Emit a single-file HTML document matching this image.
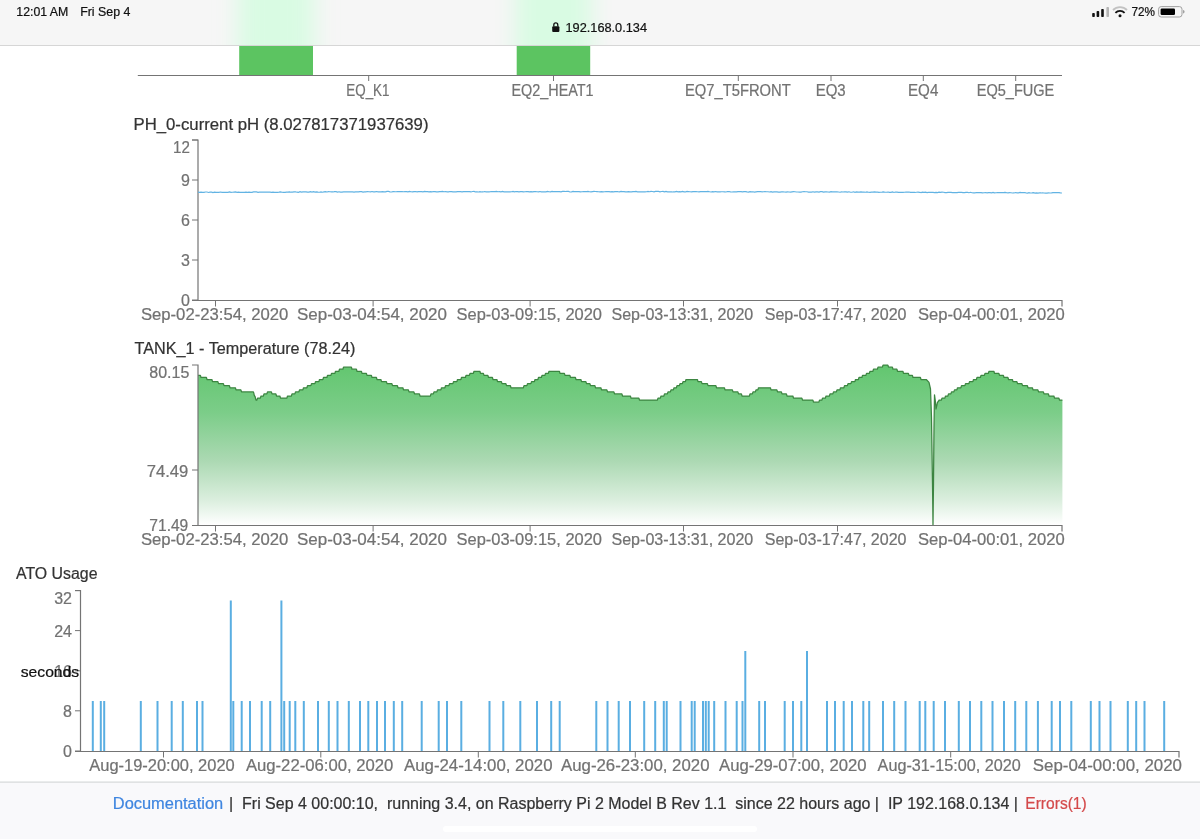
<!DOCTYPE html><html><head><meta charset="utf-8"><style>
html,body{margin:0;padding:0;background:#fff;width:1200px;height:839px;overflow:hidden}
svg{display:block;font-family:"Liberation Sans", sans-serif;will-change:transform}
text{white-space:pre}
</style></head><body>
<svg width="1200" height="839" viewBox="0 0 1200 839">
<defs>
<linearGradient id="tg" x1="0" y1="365" x2="0" y2="525" gradientUnits="userSpaceOnUse">
<stop offset="0" stop-color="#62c66f"/><stop offset="0.3" stop-color="#7ccd89"/><stop offset="0.6" stop-color="#acd9b3"/><stop offset="0.85" stop-color="#dcefdf"/><stop offset="1" stop-color="#ffffff"/>
</linearGradient>
<filter id="blur" x="-50%" y="-50%" width="200%" height="200%"><feGaussianBlur stdDeviation="11 0"/></filter>
<clipPath id="sb"><rect x="0" y="0" width="1200" height="45"/></clipPath>
</defs>
<rect x="0" y="0" width="1200" height="839" fill="#ffffff"/>

<rect x="239.2" y="40" width="73.8" height="35.2" fill="#5cc461"/>
<rect x="516.7" y="40" width="73.5" height="35.2" fill="#5cc461"/>
<path d="M137.8,75.5 H1062" stroke="#747474" stroke-width="1.2" fill="none"/>
<path d="M368.7,75.5 V81" stroke="#747474" stroke-width="1" fill="none"/>
<path d="M553.5,75.5 V81" stroke="#747474" stroke-width="1" fill="none"/>
<path d="M738.3,75.5 V81" stroke="#747474" stroke-width="1" fill="none"/>
<path d="M831,75.5 V81" stroke="#747474" stroke-width="1" fill="none"/>
<path d="M923.3,75.5 V81" stroke="#747474" stroke-width="1" fill="none"/>
<path d="M1015.7,75.5 V81" stroke="#747474" stroke-width="1" fill="none"/>
<text x="346.3" y="95.6" font-size="16" fill="#727272" stroke="#727272" stroke-width="0.22" text-anchor="start" font-weight="normal" textLength="43.2" lengthAdjust="spacingAndGlyphs" >EQ_K1</text>
<text x="511.5" y="95.6" font-size="16" fill="#727272" stroke="#727272" stroke-width="0.22" text-anchor="start" font-weight="normal" textLength="82.1" lengthAdjust="spacingAndGlyphs" >EQ2_HEAT1</text>
<text x="685" y="95.6" font-size="16" fill="#727272" stroke="#727272" stroke-width="0.22" text-anchor="start" font-weight="normal" textLength="105.7" lengthAdjust="spacingAndGlyphs" >EQ7_T5FRONT</text>
<text x="815.7" y="95.6" font-size="16" fill="#727272" stroke="#727272" stroke-width="0.22" text-anchor="start" font-weight="normal" textLength="30.0" lengthAdjust="spacingAndGlyphs" >EQ3</text>
<text x="908" y="95.6" font-size="16" fill="#727272" stroke="#727272" stroke-width="0.22" text-anchor="start" font-weight="normal" textLength="30.3" lengthAdjust="spacingAndGlyphs" >EQ4</text>
<text x="976.7" y="95.6" font-size="16" fill="#727272" stroke="#727272" stroke-width="0.22" text-anchor="start" font-weight="normal" textLength="77.6" lengthAdjust="spacingAndGlyphs" >EQ5_FUGE</text>
<g clip-path="url(#sb)">
<rect x="0" y="0" width="1200" height="45" fill="#f6f6f6"/>
<g filter="url(#blur)"><rect x="238" y="-10" width="76" height="70" fill="#d9fbe3"/><rect x="515.5" y="-10" width="76" height="70" fill="#d9fbe3"/></g>
</g>
<rect x="0" y="45" width="1200" height="1" fill="#d6d6d6"/>
<text x="16.3" y="16.2" font-size="12.5" fill="#111" stroke="#111" stroke-width="0.22" text-anchor="start" font-weight="normal" textLength="52" lengthAdjust="spacingAndGlyphs" stroke="#111" stroke-width="0.55">12:01 AM</text>
<text x="80.2" y="16.2" font-size="12.5" fill="#111" stroke="#111" stroke-width="0.22" text-anchor="start" font-weight="normal" textLength="50.2" lengthAdjust="spacingAndGlyphs" stroke="#111" stroke-width="0.55">Fri Sep 4</text>
<path d="M553.8,26.5 v-1.6 a2,2 0 0 1 4,0 v1.6" stroke="#111" stroke-width="1.3" fill="none"/><rect x="552.2" y="26.3" width="7.2" height="5.7" rx="1" fill="#111"/>
<text x="565.5" y="32.2" font-size="13" fill="#111" stroke="#111" stroke-width="0.22" text-anchor="start" font-weight="normal" textLength="81.5" lengthAdjust="spacingAndGlyphs" >192.168.0.134</text>
<rect x="1092.2" y="13" width="2.6" height="4" rx="0.8" fill="#111"/>
<rect x="1096.6" y="11" width="2.6" height="6" rx="0.8" fill="#111"/>
<rect x="1101.2" y="9" width="2.6" height="8" rx="0.8" fill="#111"/>
<rect x="1106.4" y="7" width="2.6" height="10" rx="0.8" fill="#b5b5b5"/>
<g transform="translate(1120,16.6)"><path d="M-7,-6.6 A10,10 0 0 1 7,-6.6" stroke="#c2c2c2" stroke-width="1.8" fill="none"/><path d="M-4.6,-3.8 A6.5,6.5 0 0 1 4.6,-3.8" stroke="#111" stroke-width="1.8" fill="none"/><circle cx="0" cy="-0.9" r="1.5" fill="#111"/></g>
<text x="1131.5" y="16" font-size="12" fill="#111" stroke="#111" stroke-width="0.22" text-anchor="start" font-weight="normal" textLength="23.5" lengthAdjust="spacingAndGlyphs" >72%</text>
<rect x="1158.6" y="6.6" width="23.4" height="10.4" rx="2.6" fill="none" stroke="#a0a0a0" stroke-width="1"/><rect x="1160.6" y="8.5" width="14.4" height="6.6" rx="1.3" fill="#000"/><path d="M1183,10 v3.6 a1.6,1.8 0 0 0 0,-3.6z" fill="#a0a0a0"/>
<text x="133.5" y="129.5" font-size="16" fill="#333" stroke="#333" stroke-width="0.22" text-anchor="start" font-weight="normal" textLength="295" lengthAdjust="spacingAndGlyphs" >PH_0-current pH (8.027817371937639)</text>
<path d="M192,140 H198 V300.5 M192,300.5 H1062 V306.5" stroke="#747474" stroke-width="1.2" fill="none"/>
<path d="M192,140 H198" stroke="#747474" stroke-width="1"/>
<text x="189.8" y="152.6" font-size="16" fill="#727272" stroke="#727272" stroke-width="0.22" text-anchor="end" font-weight="normal" textLength="16.8" lengthAdjust="spacingAndGlyphs" >12</text>
<path d="M192,180 H198" stroke="#747474" stroke-width="1"/>
<text x="189.8" y="186.2" font-size="16" fill="#727272" stroke="#727272" stroke-width="0.22" text-anchor="end" font-weight="normal" >9</text>
<path d="M192,220 H198" stroke="#747474" stroke-width="1"/>
<text x="189.8" y="226.2" font-size="16" fill="#727272" stroke="#727272" stroke-width="0.22" text-anchor="end" font-weight="normal" >6</text>
<path d="M192,260 H198" stroke="#747474" stroke-width="1"/>
<text x="189.8" y="266.2" font-size="16" fill="#727272" stroke="#727272" stroke-width="0.22" text-anchor="end" font-weight="normal" >3</text>
<path d="M192,300 H198" stroke="#747474" stroke-width="1"/>
<text x="189.8" y="306.2" font-size="16" fill="#727272" stroke="#727272" stroke-width="0.22" text-anchor="end" font-weight="normal" >0</text>
<path d="M215.5,300.5 V306.5" stroke="#747474" stroke-width="1"/>
<text x="140.9" y="320.4" font-size="16" fill="#727272" stroke="#727272" stroke-width="0.22" text-anchor="start" font-weight="normal" textLength="147.4" lengthAdjust="spacingAndGlyphs" >Sep-02-23:54, 2020</text>
<path d="M373.1,300.5 V306.5" stroke="#747474" stroke-width="1"/>
<text x="297" y="320.4" font-size="16" fill="#727272" stroke="#727272" stroke-width="0.22" text-anchor="start" font-weight="normal" textLength="150" lengthAdjust="spacingAndGlyphs" >Sep-03-04:54, 2020</text>
<path d="M530.1,300.5 V306.5" stroke="#747474" stroke-width="1"/>
<text x="456.5" y="320.4" font-size="16" fill="#727272" stroke="#727272" stroke-width="0.22" text-anchor="start" font-weight="normal" textLength="145.5" lengthAdjust="spacingAndGlyphs" >Sep-03-09:15, 2020</text>
<path d="M683.5,300.5 V306.5" stroke="#747474" stroke-width="1"/>
<text x="611.5" y="320.4" font-size="16" fill="#727272" stroke="#727272" stroke-width="0.22" text-anchor="start" font-weight="normal" textLength="141.8" lengthAdjust="spacingAndGlyphs" >Sep-03-13:31, 2020</text>
<path d="M837.5,300.5 V306.5" stroke="#747474" stroke-width="1"/>
<text x="764.7" y="320.4" font-size="16" fill="#727272" stroke="#727272" stroke-width="0.22" text-anchor="start" font-weight="normal" textLength="141.8" lengthAdjust="spacingAndGlyphs" >Sep-03-17:47, 2020</text>
<text x="918" y="320.4" font-size="16" fill="#727272" stroke="#727272" stroke-width="0.22" text-anchor="start" font-weight="normal" textLength="146.7" lengthAdjust="spacingAndGlyphs" >Sep-04-00:01, 2020</text>
<path d="M198.0,192.14 L199.5,192.32 L201.0,192.21 L202.5,192.35 L204.0,192.36 L205.5,192.02 L207.0,191.98 L208.5,192.47 L210.0,192.12 L211.5,192.10 L213.0,192.55 L214.5,192.23 L216.0,192.45 L217.5,192.23 L219.0,192.32 L220.5,192.02 L222.0,192.31 L223.5,192.45 L225.0,192.23 L226.5,192.36 L228.0,192.31 L229.5,191.94 L231.0,192.36 L232.5,192.25 L234.0,192.07 L235.5,191.91 L237.0,192.40 L238.5,192.16 L240.0,192.31 L241.5,192.40 L243.0,192.29 L244.5,192.41 L246.0,192.09 L247.5,192.33 L249.0,192.12 L250.5,192.41 L252.0,192.37 L253.5,191.89 L255.0,191.91 L256.5,191.96 L258.0,192.40 L259.5,192.08 L261.0,192.19 L262.5,191.99 L264.0,192.11 L265.5,192.03 L267.0,192.01 L268.5,192.14 L270.0,192.14 L271.5,192.32 L273.0,192.19 L274.5,192.33 L276.0,192.28 L277.5,192.36 L279.0,192.16 L280.5,191.85 L282.0,192.27 L283.5,192.32 L285.0,192.28 L286.5,192.08 L288.0,192.16 L289.5,191.85 L291.0,192.22 L292.5,192.06 L294.0,191.89 L295.5,191.75 L297.0,192.22 L298.5,192.30 L300.0,191.75 L301.5,192.17 L303.0,191.93 L304.5,191.77 L306.0,191.86 L307.5,192.14 L309.0,192.19 L310.5,191.69 L312.0,192.03 L313.5,191.68 L315.0,192.08 L316.5,191.85 L318.0,192.17 L319.5,192.23 L321.0,191.94 L322.5,192.23 L324.0,191.81 L325.5,191.67 L327.0,191.98 L328.5,191.63 L330.0,191.73 L331.5,191.85 L333.0,191.97 L334.5,191.69 L336.0,191.62 L337.5,192.11 L339.0,191.77 L340.5,192.15 L342.0,192.11 L343.5,191.79 L345.0,191.84 L346.5,191.87 L348.0,191.94 L349.5,191.91 L351.0,191.88 L352.5,191.91 L354.0,192.10 L355.5,191.84 L357.0,191.79 L358.5,191.96 L360.0,191.66 L361.5,191.70 L363.0,192.10 L364.5,191.82 L366.0,191.83 L367.5,191.50 L369.0,191.74 L370.5,191.84 L372.0,191.50 L373.5,191.85 L375.0,191.85 L376.5,191.51 L378.0,191.84 L379.5,191.74 L381.0,191.86 L382.5,191.66 L384.0,191.87 L385.5,191.89 L387.0,191.45 L388.5,191.47 L390.0,191.84 L391.5,192.00 L393.0,191.57 L394.5,191.69 L396.0,191.77 L397.5,191.60 L399.0,191.62 L400.5,191.59 L402.0,191.62 L403.5,191.76 L405.0,191.58 L406.5,191.63 L408.0,191.86 L409.5,191.42 L411.0,191.74 L412.5,191.84 L414.0,191.59 L415.5,191.53 L417.0,191.88 L418.5,191.54 L420.0,191.51 L421.5,191.66 L423.0,191.82 L424.5,191.46 L426.0,191.59 L427.5,191.60 L429.0,191.90 L430.5,191.66 L432.0,191.91 L433.5,191.50 L435.0,191.60 L436.5,191.79 L438.0,191.93 L439.5,191.67 L441.0,191.54 L442.5,191.47 L444.0,191.72 L445.5,191.51 L447.0,191.88 L448.5,191.90 L450.0,191.51 L451.5,191.57 L453.0,191.88 L454.5,191.79 L456.0,191.88 L457.5,191.61 L459.0,191.48 L460.5,191.58 L462.0,191.88 L463.5,191.56 L465.0,191.61 L466.5,191.65 L468.0,191.65 L469.5,191.65 L471.0,191.95 L472.5,191.49 L474.0,191.40 L475.5,191.97 L477.0,191.93 L478.5,191.99 L480.0,191.66 L481.5,191.97 L483.0,191.96 L484.5,191.53 L486.0,191.85 L487.5,191.90 L489.0,191.80 L490.5,191.71 L492.0,191.57 L493.5,191.60 L495.0,191.54 L496.5,191.44 L498.0,191.75 L499.5,191.57 L501.0,191.89 L502.5,191.43 L504.0,191.94 L505.5,191.82 L507.0,191.95 L508.5,191.94 L510.0,191.94 L511.5,191.75 L513.0,191.41 L514.5,191.85 L516.0,191.50 L517.5,191.58 L519.0,191.80 L520.5,191.71 L522.0,191.65 L523.5,191.96 L525.0,191.77 L526.5,191.60 L528.0,191.55 L529.5,191.92 L531.0,191.69 L532.5,191.87 L534.0,191.61 L535.5,191.52 L537.0,191.72 L538.5,191.89 L540.0,191.50 L541.5,191.88 L543.0,191.95 L544.5,191.88 L546.0,191.89 L547.5,191.40 L549.0,191.78 L550.5,191.92 L552.0,191.43 L553.5,191.56 L555.0,191.56 L556.5,191.72 L558.0,191.65 L559.5,191.68 L561.0,191.87 L562.5,191.40 L564.0,191.43 L565.5,191.48 L567.0,191.47 L568.5,191.44 L570.0,191.98 L571.5,191.91 L573.0,191.45 L574.5,191.70 L576.0,191.59 L577.5,191.59 L579.0,191.61 L580.5,191.79 L582.0,191.75 L583.5,191.62 L585.0,191.51 L586.5,191.60 L588.0,191.47 L589.5,191.73 L591.0,191.83 L592.5,191.63 L594.0,191.45 L595.5,191.51 L597.0,191.62 L598.5,191.76 L600.0,191.87 L601.5,191.63 L603.0,191.88 L604.5,191.77 L606.0,191.66 L607.5,191.62 L609.0,191.70 L610.5,191.82 L612.0,191.65 L613.5,191.82 L615.0,191.68 L616.5,191.55 L618.0,191.72 L619.5,191.82 L621.0,191.44 L622.5,191.65 L624.0,191.66 L625.5,191.93 L627.0,191.96 L628.5,191.62 L630.0,191.94 L631.5,191.87 L633.0,191.56 L634.5,191.68 L636.0,191.47 L637.5,191.89 L639.0,191.80 L640.5,191.93 L642.0,191.88 L643.5,191.80 L645.0,191.84 L646.5,191.74 L648.0,191.46 L649.5,191.75 L651.0,191.40 L652.5,191.49 L654.0,191.86 L655.5,191.43 L657.0,191.46 L658.5,191.46 L660.0,191.93 L661.5,191.51 L663.0,191.41 L664.5,191.90 L666.0,191.47 L667.5,191.91 L669.0,191.80 L670.5,191.90 L672.0,191.97 L673.5,191.75 L675.0,191.88 L676.5,191.42 L678.0,191.86 L679.5,191.71 L681.0,191.83 L682.5,191.46 L684.0,191.85 L685.5,191.96 L687.0,191.44 L688.5,191.59 L690.0,191.74 L691.5,191.90 L693.0,191.55 L694.5,191.51 L696.0,191.55 L697.5,191.77 L699.0,191.85 L700.5,191.64 L702.0,191.62 L703.5,191.64 L705.0,191.62 L706.5,191.66 L708.0,191.47 L709.5,191.72 L711.0,192.01 L712.5,191.67 L714.0,191.88 L715.5,191.53 L717.0,191.85 L718.5,191.89 L720.0,191.84 L721.5,191.75 L723.0,191.74 L724.5,191.83 L726.0,191.99 L727.5,191.54 L729.0,191.52 L730.5,191.91 L732.0,192.01 L733.5,191.78 L735.0,191.74 L736.5,191.90 L738.0,191.59 L739.5,191.64 L741.0,191.60 L742.5,191.84 L744.0,191.68 L745.5,191.63 L747.0,191.91 L748.5,192.07 L750.0,191.68 L751.5,191.93 L753.0,191.75 L754.5,192.02 L756.0,191.86 L757.5,191.68 L759.0,191.65 L760.5,191.53 L762.0,191.81 L763.5,191.76 L765.0,191.63 L766.5,191.75 L768.0,191.73 L769.5,192.00 L771.0,191.63 L772.5,192.14 L774.0,191.84 L775.5,191.91 L777.0,191.83 L778.5,192.06 L780.0,192.05 L781.5,191.90 L783.0,191.85 L784.5,192.00 L786.0,192.09 L787.5,191.82 L789.0,192.02 L790.5,192.16 L792.0,191.86 L793.5,191.72 L795.0,191.73 L796.5,192.02 L798.0,192.00 L799.5,192.17 L801.0,192.11 L802.5,191.75 L804.0,191.72 L805.5,191.77 L807.0,191.73 L808.5,192.04 L810.0,192.14 L811.5,192.16 L813.0,191.78 L814.5,192.15 L816.0,191.82 L817.5,191.89 L819.0,192.08 L820.5,191.69 L822.0,191.70 L823.5,192.15 L825.0,191.83 L826.5,191.87 L828.0,192.00 L829.5,192.06 L831.0,191.67 L832.5,191.87 L834.0,191.93 L835.5,191.96 L837.0,191.80 L838.5,192.03 L840.0,192.25 L841.5,191.92 L843.0,192.01 L844.5,191.76 L846.0,191.86 L847.5,192.09 L849.0,191.77 L850.5,192.23 L852.0,192.26 L853.5,191.78 L855.0,192.29 L856.5,191.96 L858.0,192.20 L859.5,192.20 L861.0,191.93 L862.5,192.17 L864.0,192.16 L865.5,192.26 L867.0,191.94 L868.5,192.25 L870.0,192.38 L871.5,192.21 L873.0,192.14 L874.5,191.89 L876.0,192.13 L877.5,192.05 L879.0,192.28 L880.5,192.26 L882.0,192.20 L883.5,191.98 L885.0,192.26 L886.5,192.26 L888.0,192.00 L889.5,192.43 L891.0,192.30 L892.5,191.99 L894.0,192.48 L895.5,192.01 L897.0,192.13 L898.5,192.37 L900.0,192.31 L901.5,192.29 L903.0,192.35 L904.5,192.25 L906.0,192.17 L907.5,192.09 L909.0,192.04 L910.5,192.43 L912.0,192.46 L913.5,192.34 L915.0,192.47 L916.5,192.25 L918.0,192.20 L919.5,192.28 L921.0,192.58 L922.5,192.09 L924.0,192.37 L925.5,192.23 L927.0,192.55 L928.5,192.30 L930.0,192.30 L931.5,192.35 L933.0,192.44 L934.5,192.59 L936.0,192.34 L937.5,192.65 L939.0,192.21 L940.5,192.31 L942.0,192.22 L943.5,192.24 L945.0,192.64 L946.5,192.62 L948.0,192.30 L949.5,192.31 L951.0,192.45 L952.5,192.65 L954.0,192.70 L955.5,192.67 L957.0,192.58 L958.5,192.32 L960.0,192.47 L961.5,192.36 L963.0,192.56 L964.5,192.59 L966.0,192.38 L967.5,192.41 L969.0,192.74 L970.5,192.29 L972.0,192.76 L973.5,192.82 L975.0,192.86 L976.5,192.52 L978.0,192.63 L979.5,192.66 L981.0,192.69 L982.5,192.90 L984.0,192.73 L985.5,192.51 L987.0,192.85 L988.5,192.63 L990.0,192.70 L991.5,192.78 L993.0,192.35 L994.5,192.82 L996.0,192.76 L997.5,192.66 L999.0,192.69 L1000.5,192.66 L1002.0,192.50 L1003.5,192.71 L1005.0,192.42 L1006.5,192.70 L1008.0,192.79 L1009.5,192.68 L1011.0,192.76 L1012.5,193.00 L1014.0,192.96 L1015.5,192.52 L1017.0,192.91 L1018.5,192.82 L1020.0,192.48 L1021.5,192.67 L1023.0,192.60 L1024.5,192.51 L1026.0,192.79 L1027.5,193.03 L1029.0,192.68 L1030.5,193.01 L1032.0,192.91 L1033.5,192.58 L1035.0,193.02 L1036.5,192.87 L1038.0,193.07 L1039.5,192.95 L1041.0,192.97 L1042.5,192.74 L1044.0,193.02 L1045.5,193.10 L1047.0,193.06 L1048.5,192.81 L1050.0,193.01 L1051.5,192.85 L1053.0,192.63 L1054.5,192.60 L1056.0,192.63 L1057.5,192.70 L1059.0,192.69 L1060.5,192.89 L1062.0,193.02" stroke="#62b3e3" stroke-width="1.2" fill="none"/>
<text x="134.6" y="354" font-size="16" fill="#333" stroke="#333" stroke-width="0.22" text-anchor="start" font-weight="normal" textLength="220.8" lengthAdjust="spacingAndGlyphs" >TANK_1 - Temperature (78.24)</text>
<path d="M198.00,375.40 L200.40,375.40 L201.00,377.46 L206.40,377.46 L207.00,379.52 L211.90,379.52 L212.50,381.58 L217.90,381.58 L218.50,383.64 L223.40,383.64 L224.00,385.70 L229.40,385.70 L230.00,387.76 L235.40,387.76 L236.00,389.82 L240.90,389.82 L241.50,391.88 L253.40,391.88 L254.00,393.94 L253.90,393.94 L254.50,396.00 L254.90,396.00 L255.50,398.06 L255.40,398.06 L256.00,400.12 L256.90,400.12 L257.50,398.06 L260.40,398.06 L261.00,396.00 L263.40,396.00 L264.00,393.94 L266.90,393.94 L267.50,391.88 L271.40,391.88 L272.00,393.94 L275.90,393.94 L276.50,396.00 L279.90,396.00 L280.50,398.06 L286.90,398.06 L287.50,396.00 L291.40,396.00 L292.00,393.94 L294.90,393.94 L295.50,391.88 L298.90,391.88 L299.50,389.82 L302.90,389.82 L303.50,387.76 L306.90,387.76 L307.50,385.70 L310.90,385.70 L311.50,383.64 L314.90,383.64 L315.50,381.58 L318.90,381.58 L319.50,379.52 L322.90,379.52 L323.50,377.46 L326.90,377.46 L327.50,375.40 L330.90,375.40 L331.50,373.34 L334.90,373.34 L335.50,371.28 L338.90,371.28 L339.50,369.22 L342.90,369.22 L343.50,367.16 L351.40,367.16 L352.00,369.22 L356.40,369.22 L357.00,371.28 L361.40,371.28 L362.00,373.34 L366.40,373.34 L367.00,375.40 L371.40,375.40 L372.00,377.46 L376.40,377.46 L377.00,379.52 L380.90,379.52 L381.50,381.58 L386.40,381.58 L387.00,383.64 L391.90,383.64 L392.50,385.70 L397.40,385.70 L398.00,387.76 L402.90,387.76 L403.50,389.82 L408.40,389.82 L409.00,391.88 L413.90,391.88 L414.50,393.94 L419.40,393.94 L420.00,396.00 L430.40,396.00 L431.00,393.94 L433.40,393.94 L434.00,391.88 L436.90,391.88 L437.50,389.82 L440.90,389.82 L441.50,387.76 L444.90,387.76 L445.50,385.70 L448.90,385.70 L449.50,383.64 L452.90,383.64 L453.50,381.58 L456.90,381.58 L457.50,379.52 L460.90,379.52 L461.50,377.46 L465.40,377.46 L466.00,375.40 L469.40,375.40 L470.00,373.34 L473.40,373.34 L474.00,371.28 L479.90,371.28 L480.50,373.34 L483.40,373.34 L484.00,375.40 L487.90,375.40 L488.50,377.46 L492.40,377.46 L493.00,379.52 L496.90,379.52 L497.50,381.58 L501.40,381.58 L502.00,383.64 L505.90,383.64 L506.50,385.70 L510.40,385.70 L511.00,387.76 L523.40,387.76 L524.00,385.70 L526.90,385.70 L527.50,383.64 L530.90,383.64 L531.50,381.58 L534.40,381.58 L535.00,379.52 L537.90,379.52 L538.50,377.46 L541.40,377.46 L542.00,375.40 L544.90,375.40 L545.50,373.34 L548.40,373.34 L549.00,371.28 L559.40,371.28 L560.00,373.34 L564.40,373.34 L565.00,375.40 L569.90,375.40 L570.50,377.46 L575.40,377.46 L576.00,379.52 L580.90,379.52 L581.50,381.58 L585.90,381.58 L586.50,383.64 L589.90,383.64 L590.50,385.70 L594.90,385.70 L595.50,387.76 L600.90,387.76 L601.50,389.82 L606.90,389.82 L607.50,391.88 L613.90,391.88 L614.50,393.94 L621.90,393.94 L622.50,396.00 L630.40,396.00 L631.00,398.06 L638.90,398.06 L639.50,400.12 L657.40,400.12 L658.00,398.06 L660.40,398.06 L661.00,396.00 L663.90,396.00 L664.50,393.94 L667.40,393.94 L668.00,391.88 L670.40,391.88 L671.00,389.82 L673.40,389.82 L674.00,387.76 L676.40,387.76 L677.00,385.70 L679.40,385.70 L680.00,383.64 L682.40,383.64 L683.00,381.58 L685.40,381.58 L686.00,379.52 L697.40,379.52 L698.00,381.58 L701.40,381.58 L702.00,383.64 L707.40,383.64 L708.00,385.70 L715.90,385.70 L716.50,387.76 L724.40,387.76 L725.00,389.82 L732.40,389.82 L733.00,391.88 L737.90,391.88 L738.50,393.94 L741.40,393.94 L742.00,396.00 L749.40,396.00 L750.00,393.94 L752.40,393.94 L753.00,391.88 L755.40,391.88 L756.00,389.82 L757.90,389.82 L758.50,387.76 L770.40,387.76 L771.00,389.82 L776.90,389.82 L777.50,391.88 L781.40,391.88 L782.00,393.94 L786.40,393.94 L787.00,396.00 L792.90,396.00 L793.50,398.06 L801.90,398.06 L802.50,400.12 L812.90,400.12 L813.50,402.18 L818.90,402.18 L819.50,400.12 L821.90,400.12 L822.50,398.06 L825.40,398.06 L826.00,396.00 L829.40,396.00 L830.00,393.94 L832.90,393.94 L833.50,391.88 L836.40,391.88 L837.00,389.82 L839.90,389.82 L840.50,387.76 L843.90,387.76 L844.50,385.70 L847.40,385.70 L848.00,383.64 L850.90,383.64 L851.50,381.58 L854.90,381.58 L855.50,379.52 L858.40,379.52 L859.00,377.46 L861.90,377.46 L862.50,375.40 L865.90,375.40 L866.50,373.34 L869.40,373.34 L870.00,371.28 L872.90,371.28 L873.50,369.22 L877.40,369.22 L878.00,367.16 L882.40,367.16 L883.00,365.10 L887.90,365.10 L888.50,367.16 L892.40,367.16 L893.00,369.22 L896.90,369.22 L897.50,371.28 L902.90,371.28 L903.50,373.34 L908.40,373.34 L909.00,375.40 L912.40,375.40 L913.00,377.46 L920.40,377.46 L921.00,379.52 L926.25,379.52 L929.00,382.40 L930.50,389.00 L931.50,417.60 L932.50,484.00 L933.00,525.00 L933.50,484.00 L934.00,427.00 L934.50,394.80 L935.50,402.40 L936.00,409.00 L937.50,402.40 L939.00,400.50 L939.00,400.12 L941.40,400.12 L942.00,398.06 L944.90,398.06 L945.50,396.00 L947.90,396.00 L948.50,393.94 L950.90,393.94 L951.50,391.88 L953.90,391.88 L954.50,389.82 L956.90,389.82 L957.50,387.76 L960.90,387.76 L961.50,385.70 L964.90,385.70 L965.50,383.64 L968.90,383.64 L969.50,381.58 L972.90,381.58 L973.50,379.52 L976.40,379.52 L977.00,377.46 L980.40,377.46 L981.00,375.40 L984.40,375.40 L985.00,373.34 L988.40,373.34 L989.00,371.28 L993.90,371.28 L994.50,373.34 L998.90,373.34 L999.50,375.40 L1003.40,375.40 L1004.00,377.46 L1007.90,377.46 L1008.50,379.52 L1012.40,379.52 L1013.00,381.58 L1016.90,381.58 L1017.50,383.64 L1021.90,383.64 L1022.50,385.70 L1027.40,385.70 L1028.00,387.76 L1032.40,387.76 L1033.00,389.82 L1037.90,389.82 L1038.50,391.88 L1043.40,391.88 L1044.00,393.94 L1048.40,393.94 L1049.00,396.00 L1053.90,396.00 L1054.50,398.06 L1058.90,398.06 L1059.50,400.12 L1062.40,400.12 L1062.4,525 L198,525 Z" fill="url(#tg)"/>
<path d="M198.00,375.40 L200.40,375.40 L201.00,377.46 L206.40,377.46 L207.00,379.52 L211.90,379.52 L212.50,381.58 L217.90,381.58 L218.50,383.64 L223.40,383.64 L224.00,385.70 L229.40,385.70 L230.00,387.76 L235.40,387.76 L236.00,389.82 L240.90,389.82 L241.50,391.88 L253.40,391.88 L254.00,393.94 L253.90,393.94 L254.50,396.00 L254.90,396.00 L255.50,398.06 L255.40,398.06 L256.00,400.12 L256.90,400.12 L257.50,398.06 L260.40,398.06 L261.00,396.00 L263.40,396.00 L264.00,393.94 L266.90,393.94 L267.50,391.88 L271.40,391.88 L272.00,393.94 L275.90,393.94 L276.50,396.00 L279.90,396.00 L280.50,398.06 L286.90,398.06 L287.50,396.00 L291.40,396.00 L292.00,393.94 L294.90,393.94 L295.50,391.88 L298.90,391.88 L299.50,389.82 L302.90,389.82 L303.50,387.76 L306.90,387.76 L307.50,385.70 L310.90,385.70 L311.50,383.64 L314.90,383.64 L315.50,381.58 L318.90,381.58 L319.50,379.52 L322.90,379.52 L323.50,377.46 L326.90,377.46 L327.50,375.40 L330.90,375.40 L331.50,373.34 L334.90,373.34 L335.50,371.28 L338.90,371.28 L339.50,369.22 L342.90,369.22 L343.50,367.16 L351.40,367.16 L352.00,369.22 L356.40,369.22 L357.00,371.28 L361.40,371.28 L362.00,373.34 L366.40,373.34 L367.00,375.40 L371.40,375.40 L372.00,377.46 L376.40,377.46 L377.00,379.52 L380.90,379.52 L381.50,381.58 L386.40,381.58 L387.00,383.64 L391.90,383.64 L392.50,385.70 L397.40,385.70 L398.00,387.76 L402.90,387.76 L403.50,389.82 L408.40,389.82 L409.00,391.88 L413.90,391.88 L414.50,393.94 L419.40,393.94 L420.00,396.00 L430.40,396.00 L431.00,393.94 L433.40,393.94 L434.00,391.88 L436.90,391.88 L437.50,389.82 L440.90,389.82 L441.50,387.76 L444.90,387.76 L445.50,385.70 L448.90,385.70 L449.50,383.64 L452.90,383.64 L453.50,381.58 L456.90,381.58 L457.50,379.52 L460.90,379.52 L461.50,377.46 L465.40,377.46 L466.00,375.40 L469.40,375.40 L470.00,373.34 L473.40,373.34 L474.00,371.28 L479.90,371.28 L480.50,373.34 L483.40,373.34 L484.00,375.40 L487.90,375.40 L488.50,377.46 L492.40,377.46 L493.00,379.52 L496.90,379.52 L497.50,381.58 L501.40,381.58 L502.00,383.64 L505.90,383.64 L506.50,385.70 L510.40,385.70 L511.00,387.76 L523.40,387.76 L524.00,385.70 L526.90,385.70 L527.50,383.64 L530.90,383.64 L531.50,381.58 L534.40,381.58 L535.00,379.52 L537.90,379.52 L538.50,377.46 L541.40,377.46 L542.00,375.40 L544.90,375.40 L545.50,373.34 L548.40,373.34 L549.00,371.28 L559.40,371.28 L560.00,373.34 L564.40,373.34 L565.00,375.40 L569.90,375.40 L570.50,377.46 L575.40,377.46 L576.00,379.52 L580.90,379.52 L581.50,381.58 L585.90,381.58 L586.50,383.64 L589.90,383.64 L590.50,385.70 L594.90,385.70 L595.50,387.76 L600.90,387.76 L601.50,389.82 L606.90,389.82 L607.50,391.88 L613.90,391.88 L614.50,393.94 L621.90,393.94 L622.50,396.00 L630.40,396.00 L631.00,398.06 L638.90,398.06 L639.50,400.12 L657.40,400.12 L658.00,398.06 L660.40,398.06 L661.00,396.00 L663.90,396.00 L664.50,393.94 L667.40,393.94 L668.00,391.88 L670.40,391.88 L671.00,389.82 L673.40,389.82 L674.00,387.76 L676.40,387.76 L677.00,385.70 L679.40,385.70 L680.00,383.64 L682.40,383.64 L683.00,381.58 L685.40,381.58 L686.00,379.52 L697.40,379.52 L698.00,381.58 L701.40,381.58 L702.00,383.64 L707.40,383.64 L708.00,385.70 L715.90,385.70 L716.50,387.76 L724.40,387.76 L725.00,389.82 L732.40,389.82 L733.00,391.88 L737.90,391.88 L738.50,393.94 L741.40,393.94 L742.00,396.00 L749.40,396.00 L750.00,393.94 L752.40,393.94 L753.00,391.88 L755.40,391.88 L756.00,389.82 L757.90,389.82 L758.50,387.76 L770.40,387.76 L771.00,389.82 L776.90,389.82 L777.50,391.88 L781.40,391.88 L782.00,393.94 L786.40,393.94 L787.00,396.00 L792.90,396.00 L793.50,398.06 L801.90,398.06 L802.50,400.12 L812.90,400.12 L813.50,402.18 L818.90,402.18 L819.50,400.12 L821.90,400.12 L822.50,398.06 L825.40,398.06 L826.00,396.00 L829.40,396.00 L830.00,393.94 L832.90,393.94 L833.50,391.88 L836.40,391.88 L837.00,389.82 L839.90,389.82 L840.50,387.76 L843.90,387.76 L844.50,385.70 L847.40,385.70 L848.00,383.64 L850.90,383.64 L851.50,381.58 L854.90,381.58 L855.50,379.52 L858.40,379.52 L859.00,377.46 L861.90,377.46 L862.50,375.40 L865.90,375.40 L866.50,373.34 L869.40,373.34 L870.00,371.28 L872.90,371.28 L873.50,369.22 L877.40,369.22 L878.00,367.16 L882.40,367.16 L883.00,365.10 L887.90,365.10 L888.50,367.16 L892.40,367.16 L893.00,369.22 L896.90,369.22 L897.50,371.28 L902.90,371.28 L903.50,373.34 L908.40,373.34 L909.00,375.40 L912.40,375.40 L913.00,377.46 L920.40,377.46 L921.00,379.52 L926.25,379.52 L929.00,382.40 L930.50,389.00 L931.50,417.60 L932.50,484.00 L933.00,525.00 L933.50,484.00 L934.00,427.00 L934.50,394.80 L935.50,402.40 L936.00,409.00 L937.50,402.40 L939.00,400.50 L939.00,400.12 L941.40,400.12 L942.00,398.06 L944.90,398.06 L945.50,396.00 L947.90,396.00 L948.50,393.94 L950.90,393.94 L951.50,391.88 L953.90,391.88 L954.50,389.82 L956.90,389.82 L957.50,387.76 L960.90,387.76 L961.50,385.70 L964.90,385.70 L965.50,383.64 L968.90,383.64 L969.50,381.58 L972.90,381.58 L973.50,379.52 L976.40,379.52 L977.00,377.46 L980.40,377.46 L981.00,375.40 L984.40,375.40 L985.00,373.34 L988.40,373.34 L989.00,371.28 L993.90,371.28 L994.50,373.34 L998.90,373.34 L999.50,375.40 L1003.40,375.40 L1004.00,377.46 L1007.90,377.46 L1008.50,379.52 L1012.40,379.52 L1013.00,381.58 L1016.90,381.58 L1017.50,383.64 L1021.90,383.64 L1022.50,385.70 L1027.40,385.70 L1028.00,387.76 L1032.40,387.76 L1033.00,389.82 L1037.90,389.82 L1038.50,391.88 L1043.40,391.88 L1044.00,393.94 L1048.40,393.94 L1049.00,396.00 L1053.90,396.00 L1054.50,398.06 L1058.90,398.06 L1059.50,400.12 L1062.40,400.12" stroke="#3c8541" stroke-width="1.25" fill="none" stroke-linejoin="round"/>
<path d="M192,365 H198 V525.5 M192,525.5 H1062 V531.5" stroke="#747474" stroke-width="1.2" fill="none"/>
<path d="M192,470 H198" stroke="#747474" stroke-width="1"/>
<text x="189.3" y="378" font-size="16" fill="#727272" stroke="#727272" stroke-width="0.22" text-anchor="end" font-weight="normal" textLength="40" lengthAdjust="spacingAndGlyphs" >80.15</text>
<text x="188.3" y="477.3" font-size="16" fill="#727272" stroke="#727272" stroke-width="0.22" text-anchor="end" font-weight="normal" textLength="41.6" lengthAdjust="spacingAndGlyphs" >74.49</text>
<text x="188.3" y="531.3" font-size="16" fill="#727272" stroke="#727272" stroke-width="0.22" text-anchor="end" font-weight="normal" textLength="39" lengthAdjust="spacingAndGlyphs" >71.49</text>
<path d="M215.5,525.5 V531.5" stroke="#747474" stroke-width="1"/>
<text x="140.9" y="545.4" font-size="16" fill="#727272" stroke="#727272" stroke-width="0.22" text-anchor="start" font-weight="normal" textLength="147.4" lengthAdjust="spacingAndGlyphs" >Sep-02-23:54, 2020</text>
<path d="M373.1,525.5 V531.5" stroke="#747474" stroke-width="1"/>
<text x="297" y="545.4" font-size="16" fill="#727272" stroke="#727272" stroke-width="0.22" text-anchor="start" font-weight="normal" textLength="150" lengthAdjust="spacingAndGlyphs" >Sep-03-04:54, 2020</text>
<path d="M530.1,525.5 V531.5" stroke="#747474" stroke-width="1"/>
<text x="456.5" y="545.4" font-size="16" fill="#727272" stroke="#727272" stroke-width="0.22" text-anchor="start" font-weight="normal" textLength="145.5" lengthAdjust="spacingAndGlyphs" >Sep-03-09:15, 2020</text>
<path d="M683.5,525.5 V531.5" stroke="#747474" stroke-width="1"/>
<text x="611.5" y="545.4" font-size="16" fill="#727272" stroke="#727272" stroke-width="0.22" text-anchor="start" font-weight="normal" textLength="141.8" lengthAdjust="spacingAndGlyphs" >Sep-03-13:31, 2020</text>
<path d="M837.5,525.5 V531.5" stroke="#747474" stroke-width="1"/>
<text x="764.7" y="545.4" font-size="16" fill="#727272" stroke="#727272" stroke-width="0.22" text-anchor="start" font-weight="normal" textLength="141.8" lengthAdjust="spacingAndGlyphs" >Sep-03-17:47, 2020</text>
<text x="918" y="545.4" font-size="16" fill="#727272" stroke="#727272" stroke-width="0.22" text-anchor="start" font-weight="normal" textLength="146.7" lengthAdjust="spacingAndGlyphs" >Sep-04-00:01, 2020</text>
<text x="16" y="579.3" font-size="16" fill="#333" stroke="#333" stroke-width="0.22" text-anchor="start" font-weight="normal" textLength="81.5" lengthAdjust="spacingAndGlyphs" >ATO Usage</text>
<rect x="91.8" y="701" width="2" height="50.5" fill="#5aaee2"/>
<rect x="99.8" y="701" width="2" height="50.5" fill="#5aaee2"/>
<rect x="103.2" y="701" width="2" height="50.5" fill="#5aaee2"/>
<rect x="139.8" y="701" width="2" height="50.5" fill="#5aaee2"/>
<rect x="156.5" y="701" width="2" height="50.5" fill="#5aaee2"/>
<rect x="170.7" y="701" width="2" height="50.5" fill="#5aaee2"/>
<rect x="181.8" y="701" width="2" height="50.5" fill="#5aaee2"/>
<rect x="196.0" y="701" width="2" height="50.5" fill="#5aaee2"/>
<rect x="201.5" y="701" width="2" height="50.5" fill="#5aaee2"/>
<rect x="232.3" y="701" width="2" height="50.5" fill="#5aaee2"/>
<rect x="240.7" y="701" width="2" height="50.5" fill="#5aaee2"/>
<rect x="249.0" y="701" width="2" height="50.5" fill="#5aaee2"/>
<rect x="260.7" y="701" width="2" height="50.5" fill="#5aaee2"/>
<rect x="269.2" y="701" width="2" height="50.5" fill="#5aaee2"/>
<rect x="283.2" y="701" width="2" height="50.5" fill="#5aaee2"/>
<rect x="288.7" y="701" width="2" height="50.5" fill="#5aaee2"/>
<rect x="294.3" y="701" width="2" height="50.5" fill="#5aaee2"/>
<rect x="302.8" y="701" width="2" height="50.5" fill="#5aaee2"/>
<rect x="317.0" y="701" width="2" height="50.5" fill="#5aaee2"/>
<rect x="327.8" y="701" width="2" height="50.5" fill="#5aaee2"/>
<rect x="336.5" y="701" width="2" height="50.5" fill="#5aaee2"/>
<rect x="347.8" y="701" width="2" height="50.5" fill="#5aaee2"/>
<rect x="359.0" y="701" width="2" height="50.5" fill="#5aaee2"/>
<rect x="367.3" y="701" width="2" height="50.5" fill="#5aaee2"/>
<rect x="376.0" y="701" width="2" height="50.5" fill="#5aaee2"/>
<rect x="384.0" y="701" width="2" height="50.5" fill="#5aaee2"/>
<rect x="392.8" y="701" width="2" height="50.5" fill="#5aaee2"/>
<rect x="401.2" y="701" width="2" height="50.5" fill="#5aaee2"/>
<rect x="420.7" y="701" width="2" height="50.5" fill="#5aaee2"/>
<rect x="437.7" y="701" width="2" height="50.5" fill="#5aaee2"/>
<rect x="446.0" y="701" width="2" height="50.5" fill="#5aaee2"/>
<rect x="460.3" y="701" width="2" height="50.5" fill="#5aaee2"/>
<rect x="488.5" y="701" width="2" height="50.5" fill="#5aaee2"/>
<rect x="502.3" y="701" width="2" height="50.5" fill="#5aaee2"/>
<rect x="519.3" y="701" width="2" height="50.5" fill="#5aaee2"/>
<rect x="536.0" y="701" width="2" height="50.5" fill="#5aaee2"/>
<rect x="550.2" y="701" width="2" height="50.5" fill="#5aaee2"/>
<rect x="558.7" y="701" width="2" height="50.5" fill="#5aaee2"/>
<rect x="595.3" y="701" width="2" height="50.5" fill="#5aaee2"/>
<rect x="606.5" y="701" width="2" height="50.5" fill="#5aaee2"/>
<rect x="617.7" y="701" width="2" height="50.5" fill="#5aaee2"/>
<rect x="629.0" y="701" width="2" height="50.5" fill="#5aaee2"/>
<rect x="643.2" y="701" width="2" height="50.5" fill="#5aaee2"/>
<rect x="654.2" y="701" width="2" height="50.5" fill="#5aaee2"/>
<rect x="662.8" y="701" width="2" height="50.5" fill="#5aaee2"/>
<rect x="665.7" y="701" width="2" height="50.5" fill="#5aaee2"/>
<rect x="679.5" y="701" width="2" height="50.5" fill="#5aaee2"/>
<rect x="690.7" y="701" width="2" height="50.5" fill="#5aaee2"/>
<rect x="693.7" y="701" width="2" height="50.5" fill="#5aaee2"/>
<rect x="702.0" y="701" width="2" height="50.5" fill="#5aaee2"/>
<rect x="704.8" y="701" width="2" height="50.5" fill="#5aaee2"/>
<rect x="707.7" y="701" width="2" height="50.5" fill="#5aaee2"/>
<rect x="713.2" y="701" width="2" height="50.5" fill="#5aaee2"/>
<rect x="724.5" y="701" width="2" height="50.5" fill="#5aaee2"/>
<rect x="735.7" y="701" width="2" height="50.5" fill="#5aaee2"/>
<rect x="741.5" y="701" width="2" height="50.5" fill="#5aaee2"/>
<rect x="758.2" y="701" width="2" height="50.5" fill="#5aaee2"/>
<rect x="764.0" y="701" width="2" height="50.5" fill="#5aaee2"/>
<rect x="783.7" y="701" width="2" height="50.5" fill="#5aaee2"/>
<rect x="792.0" y="701" width="2" height="50.5" fill="#5aaee2"/>
<rect x="800.3" y="701" width="2" height="50.5" fill="#5aaee2"/>
<rect x="826.0" y="701" width="2" height="50.5" fill="#5aaee2"/>
<rect x="834.0" y="701" width="2" height="50.5" fill="#5aaee2"/>
<rect x="842.7" y="701" width="2" height="50.5" fill="#5aaee2"/>
<rect x="851.0" y="701" width="2" height="50.5" fill="#5aaee2"/>
<rect x="862.3" y="701" width="2" height="50.5" fill="#5aaee2"/>
<rect x="868.2" y="701" width="2" height="50.5" fill="#5aaee2"/>
<rect x="882.0" y="701" width="2" height="50.5" fill="#5aaee2"/>
<rect x="893.2" y="701" width="2" height="50.5" fill="#5aaee2"/>
<rect x="904.5" y="701" width="2" height="50.5" fill="#5aaee2"/>
<rect x="918.7" y="701" width="2" height="50.5" fill="#5aaee2"/>
<rect x="924.3" y="701" width="2" height="50.5" fill="#5aaee2"/>
<rect x="932.7" y="701" width="2" height="50.5" fill="#5aaee2"/>
<rect x="944.0" y="701" width="2" height="50.5" fill="#5aaee2"/>
<rect x="957.8" y="701" width="2" height="50.5" fill="#5aaee2"/>
<rect x="969.0" y="701" width="2" height="50.5" fill="#5aaee2"/>
<rect x="980.3" y="701" width="2" height="50.5" fill="#5aaee2"/>
<rect x="991.5" y="701" width="2" height="50.5" fill="#5aaee2"/>
<rect x="1003.0" y="701" width="2" height="50.5" fill="#5aaee2"/>
<rect x="1014.2" y="701" width="2" height="50.5" fill="#5aaee2"/>
<rect x="1025.3" y="701" width="2" height="50.5" fill="#5aaee2"/>
<rect x="1036.9" y="701" width="2" height="50.5" fill="#5aaee2"/>
<rect x="1050.7" y="701" width="2" height="50.5" fill="#5aaee2"/>
<rect x="1059.0" y="701" width="2" height="50.5" fill="#5aaee2"/>
<rect x="1070.3" y="701" width="2" height="50.5" fill="#5aaee2"/>
<rect x="1089.8" y="701" width="2" height="50.5" fill="#5aaee2"/>
<rect x="1098.5" y="701" width="2" height="50.5" fill="#5aaee2"/>
<rect x="1109.5" y="701" width="2" height="50.5" fill="#5aaee2"/>
<rect x="1126.8" y="701" width="2" height="50.5" fill="#5aaee2"/>
<rect x="1135.2" y="701" width="2" height="50.5" fill="#5aaee2"/>
<rect x="1143.5" y="701" width="2" height="50.5" fill="#5aaee2"/>
<rect x="1163.2" y="701" width="2" height="50.5" fill="#5aaee2"/>
<rect x="229.8" y="600.5" width="2" height="151.0" fill="#5aaee2"/>
<rect x="280.4" y="600.5" width="2" height="151.0" fill="#5aaee2"/>
<rect x="744.3" y="651" width="2" height="100.5" fill="#5aaee2"/>
<rect x="806.0" y="651" width="2" height="100.5" fill="#5aaee2"/>
<path d="M75,590.5 H80.5 V751.5 M75,751.5 H1179 V757.5" stroke="#747474" stroke-width="1.2" fill="none"/>
<path d="M75,590.7 H80.5" stroke="#747474" stroke-width="1"/>
<text x="72" y="603.7" font-size="16" fill="#727272" stroke="#727272" stroke-width="0.22" text-anchor="end" font-weight="normal" >32</text>
<path d="M75,630.6 H80.5" stroke="#747474" stroke-width="1"/>
<text x="72" y="636.8000000000001" font-size="16" fill="#727272" stroke="#727272" stroke-width="0.22" text-anchor="end" font-weight="normal" >24</text>
<path d="M75,670.8 H80.5" stroke="#747474" stroke-width="1"/>
<text x="72" y="677.0" font-size="16" fill="#727272" stroke="#727272" stroke-width="0.22" text-anchor="end" font-weight="normal" >16</text>
<path d="M75,710.8 H80.5" stroke="#747474" stroke-width="1"/>
<text x="72" y="717.0" font-size="16" fill="#727272" stroke="#727272" stroke-width="0.22" text-anchor="end" font-weight="normal" >8</text>
<path d="M75,751 H80.5" stroke="#747474" stroke-width="1"/>
<text x="72" y="757.2" font-size="16" fill="#727272" stroke="#727272" stroke-width="0.22" text-anchor="end" font-weight="normal" >0</text>
<text x="20.7" y="676.7" font-size="15" fill="#111" stroke="#111" stroke-width="0.22" text-anchor="start" font-weight="normal" textLength="58.5" lengthAdjust="spacingAndGlyphs" >seconds</text>
<path d="M163.5,751.5 V757.5" stroke="#747474" stroke-width="1"/>
<text x="89.3" y="771.3" font-size="16" fill="#727272" stroke="#727272" stroke-width="0.22" text-anchor="start" font-weight="normal" textLength="145.4" lengthAdjust="spacingAndGlyphs" >Aug-19-20:00, 2020</text>
<path d="M320.8,751.5 V757.5" stroke="#747474" stroke-width="1"/>
<text x="245.9" y="771.3" font-size="16" fill="#727272" stroke="#727272" stroke-width="0.22" text-anchor="start" font-weight="normal" textLength="147.4" lengthAdjust="spacingAndGlyphs" >Aug-22-06:00, 2020</text>
<path d="M478.3,751.5 V757.5" stroke="#747474" stroke-width="1"/>
<text x="404" y="771.3" font-size="16" fill="#727272" stroke="#727272" stroke-width="0.22" text-anchor="start" font-weight="normal" textLength="148.5" lengthAdjust="spacingAndGlyphs" >Aug-24-14:00, 2020</text>
<path d="M635.3,751.5 V757.5" stroke="#747474" stroke-width="1"/>
<text x="561" y="771.3" font-size="16" fill="#727272" stroke="#727272" stroke-width="0.22" text-anchor="start" font-weight="normal" textLength="148.5" lengthAdjust="spacingAndGlyphs" >Aug-26-23:00, 2020</text>
<path d="M793,751.5 V757.5" stroke="#747474" stroke-width="1"/>
<text x="719" y="771.3" font-size="16" fill="#727272" stroke="#727272" stroke-width="0.22" text-anchor="start" font-weight="normal" textLength="147.5" lengthAdjust="spacingAndGlyphs" >Aug-29-07:00, 2020</text>
<path d="M950.7,751.5 V757.5" stroke="#747474" stroke-width="1"/>
<text x="877.6" y="771.3" font-size="16" fill="#727272" stroke="#727272" stroke-width="0.22" text-anchor="start" font-weight="normal" textLength="143.3" lengthAdjust="spacingAndGlyphs" >Aug-31-15:00, 2020</text>
<text x="1032.8" y="771.3" font-size="16" fill="#727272" stroke="#727272" stroke-width="0.22" text-anchor="start" font-weight="normal" textLength="149.2" lengthAdjust="spacingAndGlyphs" >Sep-04-00:00, 2020</text>
<rect x="0" y="782" width="1200" height="57" fill="#f9f9fb"/>
<rect x="0" y="781.5" width="1200" height="1.2" fill="#d6d9d9"/>
<text x="112.8" y="808.8" font-size="16" fill="#3f86e0" stroke="#3f86e0" stroke-width="0.22" text-anchor="start" font-weight="normal" textLength="110.4" lengthAdjust="spacingAndGlyphs" >Documentation</text>
<text x="229" y="808.8" font-size="16" fill="#333" stroke="#333" stroke-width="0.22" text-anchor="start" font-weight="normal" textLength="789" lengthAdjust="spacingAndGlyphs" >|  Fri Sep 4 00:00:10,  running 3.4, on Raspberry Pi 2 Model B Rev 1.1  since 22 hours ago |  IP 192.168.0.134 |</text>
<text x="1025.3" y="808.8" font-size="16" fill="#d4494a" stroke="#d4494a" stroke-width="0.22" text-anchor="start" font-weight="normal" textLength="61.4" lengthAdjust="spacingAndGlyphs" >Errors(1)</text>
<rect x="443" y="826" width="314" height="6" rx="3" fill="#ffffff"/>
</svg></body></html>
